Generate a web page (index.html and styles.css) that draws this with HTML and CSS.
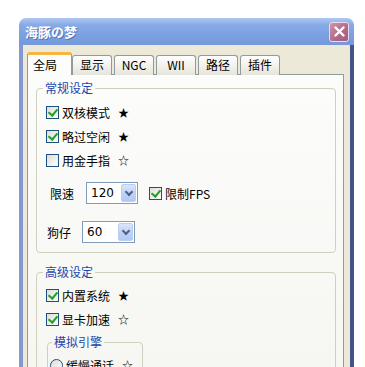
FILE: index.html
```html
<!DOCTYPE html>
<html lang="zh-CN">
<head>
  <meta charset="UTF-8" />
  <title>海豚の梦</title>
  <link rel="stylesheet" href="styles.css">
</head>
<body>

  <div class="window">
    <!-- Title bar -->
    <div class="titlebar">
      <span class="title">海豚の梦</span>
      <span class="close-btn">
        <svg width="11" height="11" viewBox="0 0 11 11"><path d="M1.5 1.5 L9.5 9.5 M9.5 1.5 L1.5 9.5" stroke="#fff" stroke-width="2.4" stroke-linecap="round"/></svg>
      </span>
    </div>

    <div class="frame">
      <!-- Tabs -->
      <div class="tabs">
        <div class="tab active">全局</div>
        <div class="tab">显示</div>
        <div class="tab">NGC</div>
        <div class="tab">WII</div>
        <div class="tab">路径</div>
        <div class="tab">插件</div>
      </div>

      <div class="panel">
        <!-- General settings -->
        <fieldset class="group">
          <legend>常规设定</legend>
          <label class="check"><span class="box checked"></span>双核模式<span class="star">★</span></label>
          <label class="check"><span class="box checked"></span>略过空闲<span class="star">★</span></label>
          <label class="check"><span class="box"></span>用金手指<span class="star">☆</span></label>

          <div class="field-row speed-row">
            <span class="field-label">限速</span>
            <div class="combo">
              <span class="combo-value">120</span>
              <span class="combo-btn"></span>
            </div>
            <label class="check inline"><span class="box checked"></span>限制FPS</label>
          </div>

          <div class="field-row dog-row">
            <span class="field-label">狗仔</span>
            <div class="combo">
              <span class="combo-value">60</span>
              <span class="combo-btn"></span>
            </div>
          </div>
        </fieldset>

        <!-- Advanced settings -->
        <fieldset class="group advanced">
          <legend>高级设定</legend>
          <label class="check"><span class="box checked"></span>内置系统<span class="star">★</span></label>
          <label class="check"><span class="box checked"></span>显卡加速<span class="star">☆</span></label>

          <fieldset class="group engine">
            <legend>模拟引擎</legend>
            <label class="check"><span class="radio"></span>缓慢通话<span class="star">☆</span></label>
          </fieldset>
        </fieldset>
      </div>
    </div>
  </div>

</body>
</html>
```

FILE: styles.css
```css
* {
  box-sizing: border-box;
}

body {
  margin: 0;
  height: 367px;
  overflow: hidden;
  background: #fff;
  font-family: "Noto Sans CJK SC", "Noto Sans", sans-serif;
  font-size: 12px;
  color: #000;
}

/* Window chrome */
.window {
  margin: 18px 0 0 19px;
  width: 335px;
}

.titlebar {
  height: 27px;
  border-radius: 7px 7px 0 0;
  background: linear-gradient(#b0c8f2, #88aae6 25%, #7da0e2 60%, #7699dc);
  display: flex;
  align-items: center;
  justify-content: space-between;
  padding: 0 5px 0 6px;
}

.title {
  color: #fff;
  font-weight: bold;
  font-size: 13px;
  text-shadow: 1px 1px #5575b4;
}

.close-btn {
  width: 20px;
  height: 20px;
  border: 1px solid #eadbe6;
  border-radius: 3px;
  background: linear-gradient(135deg, #cf93a9, #b06a88 60%, #a35c7c);
  display: flex;
  align-items: center;
  justify-content: center;
}

.frame {
  height: 340px;
  background: #ece9d8;
  border-left: 4px solid #8599d0;
  border-right: 4px solid #46538a;
  padding: 7px 6px 0 4px;
}

/* Tabs */
.tabs {
  display: flex;
  align-items: flex-end;
  gap: 2px;
  height: 23px;
  margin-bottom: -1px;
  position: relative;
  z-index: 1;
}

.tab {
  width: 40px;
  height: 20px;
  border: 1px solid #919b9c;
  border-bottom: none;
  border-radius: 3px 3px 0 0;
  background: linear-gradient(#fff, #f0efe9 60%, #e5e4dc);
  text-align: center;
  line-height: 18px;
}

.tab.active {
  width: 45px;
  height: 23px;
  margin-right: -2px;
  border-top: 3px solid #f4b543;
  background: #fcfcfa;
  text-align: left;
  padding-left: 5px;
  line-height: 19px;
}

.panel {
  height: 300px;
  border: 1px solid #919b9c;
  background: linear-gradient(#fcfcfb, #f6f6f2);
  padding: 0 7px 0 8px;
}

/* Group boxes */
.group {
  margin: 5px 0 0;
  padding: 4px 7px 9px 9px;
  border: 1px solid #d0d0bf;
  border-radius: 4px;
  min-width: 0;
}

.group legend {
  margin-left: -3px;
  padding: 0 2px;
  line-height: 16px;
  color: #1d46ac;
}

.group.advanced {
  margin-top: 11px;
  padding-top: 3px;
}

.group.engine {
  width: 96px;
  margin: 3px 0 0 1px;
  padding: 3px 4px 4px 2px;
}

.group.engine legend {
  margin-left: 2px;
}

/* Checkboxes */
.check {
  display: flex;
  align-items: center;
  height: 24px;
}

.check.inline {
  height: 22px;
  margin-left: 11px;
}

.box {
  width: 13px;
  height: 13px;
  margin-right: 3px;
  border: 1px solid #1c5180;
  background: linear-gradient(135deg, #dcdcd7, #fff);
}

.box.checked {
  background: linear-gradient(135deg, #dcdcd7, #fff) no-repeat,
              #fff;
  position: relative;
}

.box.checked::after {
  content: "";
  position: absolute;
  left: 3px;
  top: 0px;
  width: 4px;
  height: 7px;
  border: solid #21a121;
  border-width: 0 2px 2px 0;
  transform: rotate(40deg);
}

.radio {
  width: 13px;
  height: 13px;
  margin-right: 3px;
  border: 1px solid #1c5180;
  border-radius: 50%;
  background: linear-gradient(135deg, #dcdcd7, #fff);
}

.star {
  margin-left: 8px;
  font-size: 11px;
}

/* Combo rows */
.field-row {
  display: flex;
  align-items: center;
  height: 22px;
}

.speed-row {
  margin-top: 10px;
  padding-left: 4px;
}

.dog-row {
  margin-top: 17px;
  padding-left: 1px;
}

.combo {
  width: 52px;
  height: 22px;
  margin-left: 12px;
  border: 1px solid #7f9db9;
  background: #fff;
  display: flex;
  align-items: center;
  justify-content: space-between;
  padding: 1px;
}

.dog-row .combo {
  width: 53px;
  margin-left: 11px;
}

.combo-value {
  padding-left: 3px;
  font-family: "DejaVu Sans", sans-serif;
  font-size: 12px;
}

.combo-btn {
  width: 15px;
  height: 18px;
  border: 1px solid #bccdf4;
  border-radius: 2px;
  background: linear-gradient(#dbe5fc, #c1d2f8 50%, #b3c8f5);
  position: relative;
}

.combo-btn::after {
  content: "";
  position: absolute;
  left: 4px;
  top: 4px;
  width: 4px;
  height: 4px;
  border: solid #4d6185;
  border-width: 0 2px 2px 0;
  transform: rotate(45deg);
}
```
